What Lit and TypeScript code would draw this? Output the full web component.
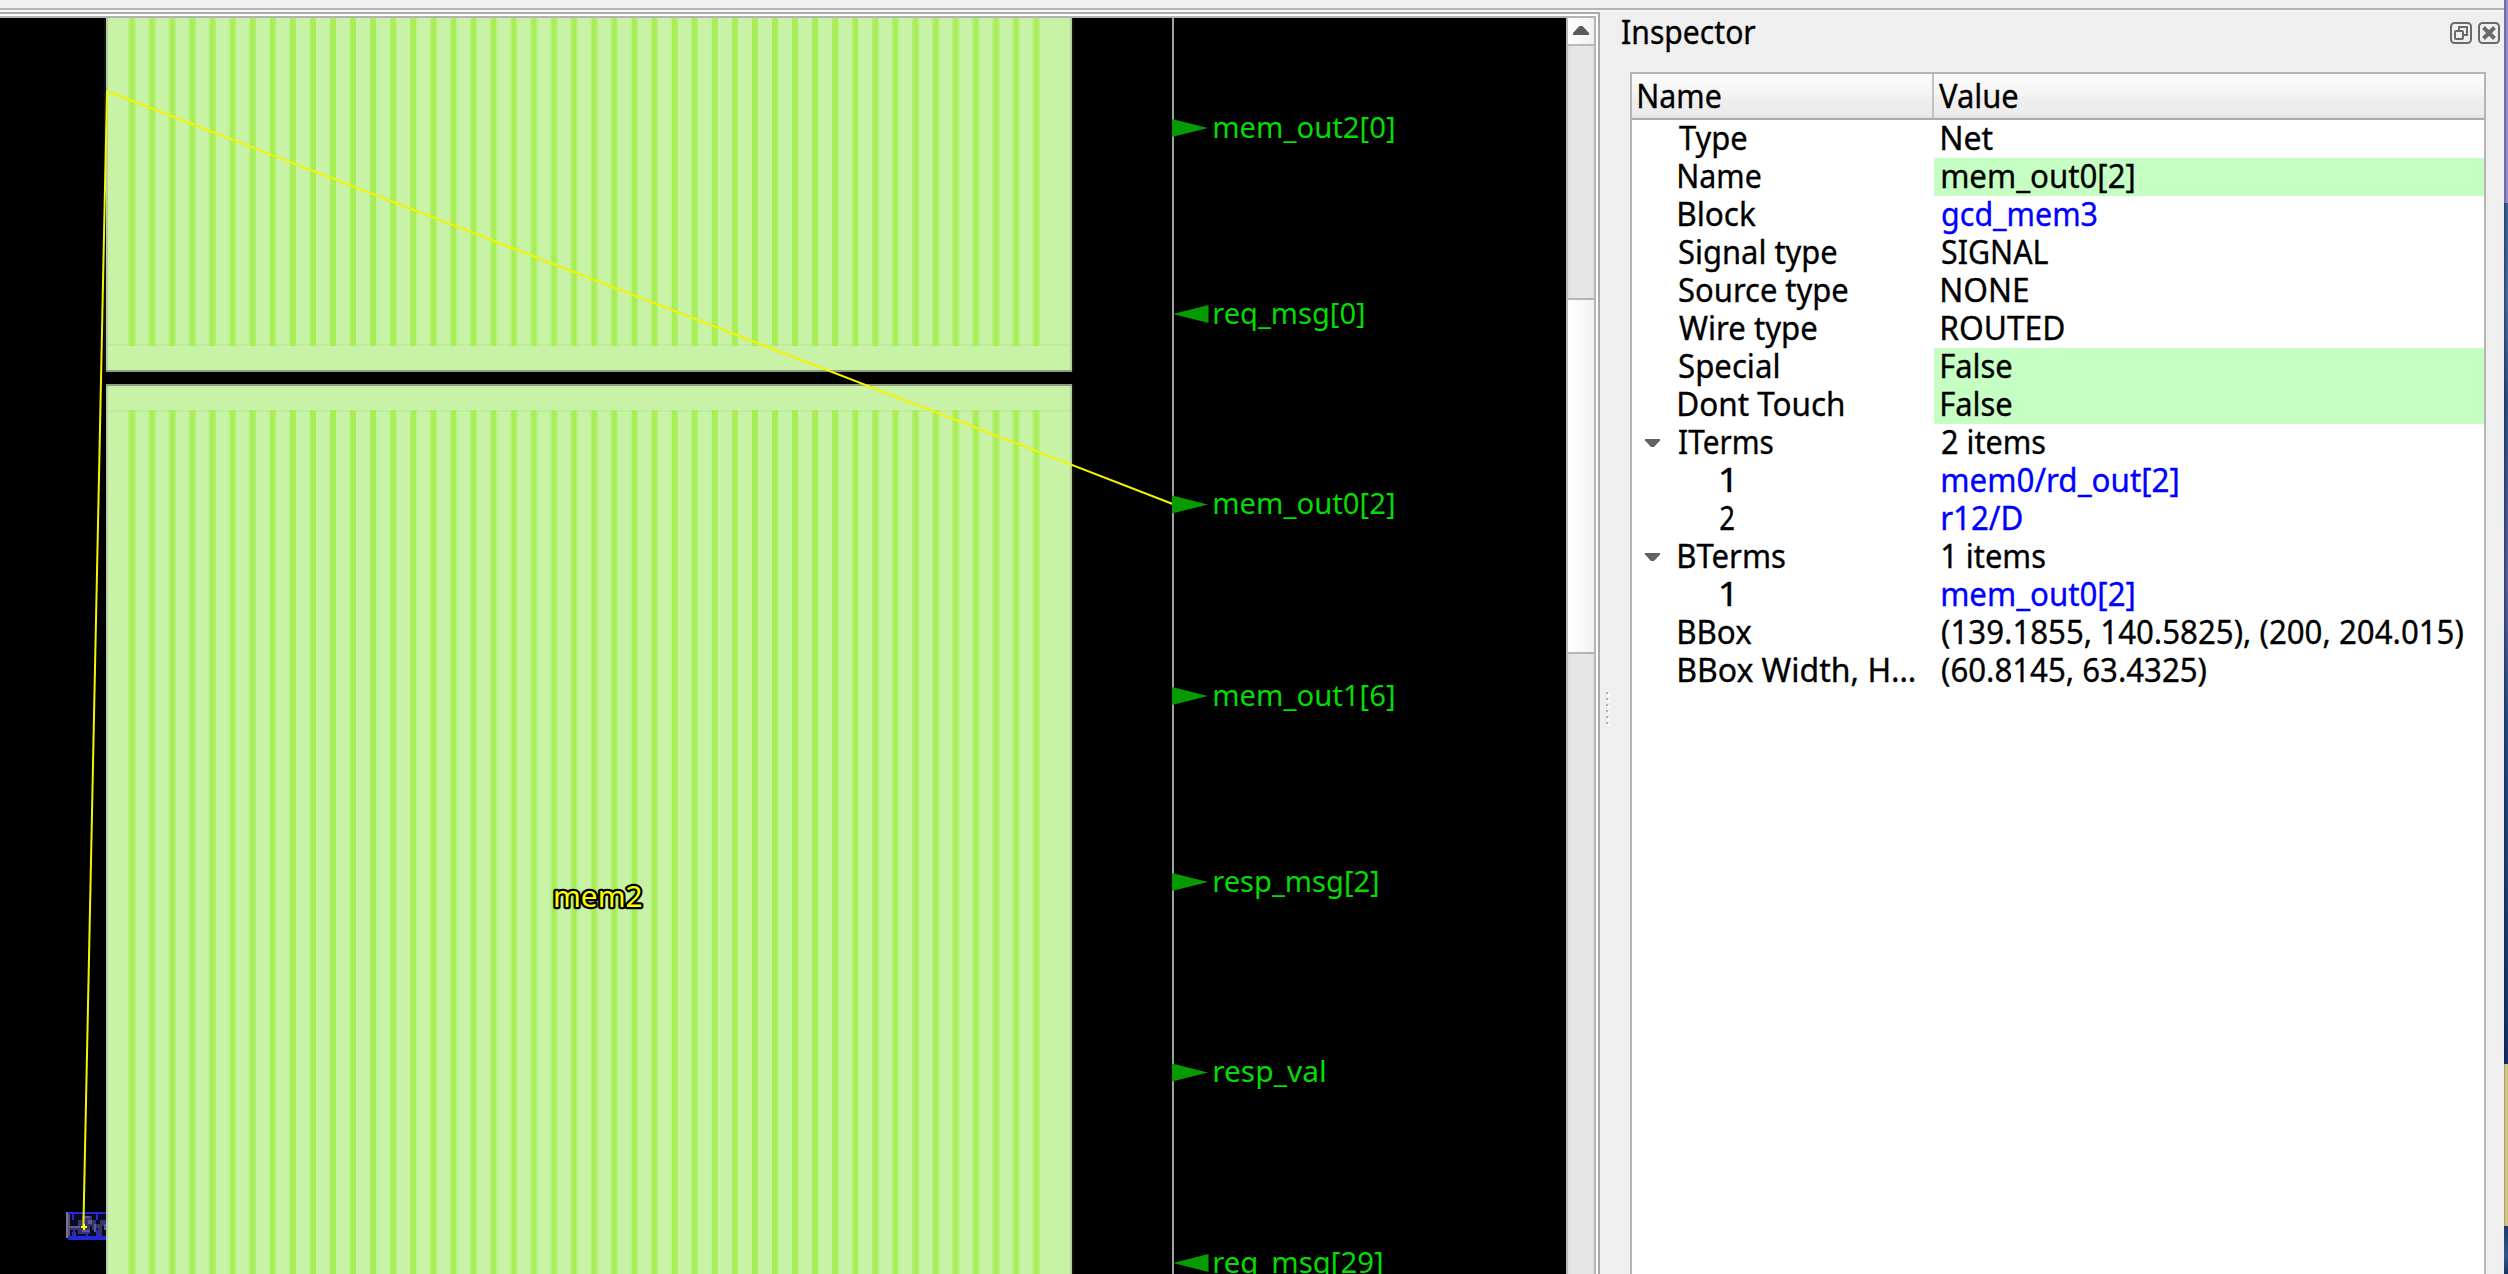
import { LitElement, html, svg, css, nothing } from "lit";
import { customElement, property } from "lit/decorators.js";

const FAMILY = '"Noto Sans", "Open Sans", sans-serif';
const pen = document.createElement("canvas").getContext("2d")!;

/** Horizontal placement that makes the ink of a string fill exactly `width` pixels. */
function fit(text: string, size: number, width: number) {
  pen.font = `${size}px ${FAMILY}`;
  const m = pen.measureText(text);
  const scale = width / (m.actualBoundingBoxLeft + m.actualBoundingBoxRight);
  return { scale, shift: m.actualBoundingBoxLeft * scale };
}

/** A single line of text condensed to a given ink width. */
@customElement("fit-label")
export class FitLabel extends LitElement {
  @property() text = "";
  @property({ type: Number }) ink = 100;
  @property({ type: Number }) size = 33.5;

  static styles = css`
    :host { display: block; height: 38px; }
    svg { display: block; overflow: visible; }
    text { font-family: "Noto Sans", "Open Sans", sans-serif; fill: currentColor; stroke: currentColor; stroke-width: 0.35px; }
  `;

  render() {
    const f = fit(this.text, this.size, this.ink);
    return html`<svg width=${this.ink} height="38">
      <text font-size=${this.size} transform="translate(${f.shift} 30.4) scale(${f.scale} 1)">${this.text}</text>
    </svg>`;
  }
}

interface Pin { y: number; name: string; ink: number; out: boolean; }

const PINS: Pin[] = [
  { y: 128, name: "mem_out2[0]", ink: 180, out: true },
  { y: 314, name: "req_msg[0]", ink: 150, out: false },
  { y: 504.5, name: "mem_out0[2]", ink: 180, out: true },
  { y: 696, name: "mem_out1[6]", ink: 180, out: true },
  { y: 882, name: "resp_msg[2]", ink: 164, out: true },
  { y: 1072.5, name: "resp_val", ink: 110, out: true },
  { y: 1263, name: "req_msg[29]", ink: 168, out: false },
];

/** The black layout canvas with macros, flight lines and pins. */
@customElement("layout-canvas")
export class LayoutCanvas extends LitElement {
  static styles = css`
    :host { display: block; width: 1566px; height: 1256px; background: #000; overflow: hidden; }
    svg { display: block; }
    .macro { fill: #c8f3a7; }
    .edge { fill: #8e9d83; }
    .side { fill: #b4cda3; }
    .seam { fill: #bfec9d; }
    .strap { fill: #a8ee57; }
    .die { fill: #a09ea4; }
    .pin { fill: #079b03; }
    .halo { fill: #121012; }
    text { font-family: "Noto Sans", "Open Sans", sans-serif; }
    .pin-name { fill: #04dc04; font-size: 28.5px; }
    .inst { fill: #ffff00; stroke: #000; stroke-width: 4.5px; paint-order: stroke; stroke-linejoin: round; font-size: 29px; }
    .net { stroke: #f4f400; stroke-width: 2px; fill: none; }
  `;

  /** Vertical straps, sampled on the two-pixel device grid. */
  private straps(top: number, bottom: number) {
    const out = [];
    for (let k = 0; k < 46; k++) {
      const a = 129.1 + k * 20.09;
      const b = a + 6;
      for (let x = Math.floor(a / 2) * 2; x < b; x += 2) {
        const cover = (Math.min(b, x + 2) - Math.max(a, x)) / 2;
        if (cover > 0.05) {
          out.push(svg`<rect class="strap" x=${x} y=${top} width="2" height=${bottom - top} opacity=${cover > 0.95 ? 1 : cover.toFixed(2)}/>`);
        }
      }
    }
    return out;
  }

  private pin(p: Pin) {
    const f = fit(p.name, 28.5, p.ink);
    const points = p.out
      ? `1172,${p.y - 9} 1172,${p.y + 9} 1208,${p.y}`
      : `1208.5,${p.y - 9} 1208.5,${p.y + 9} 1173,${p.y}`;
    return svg`
      <polygon class="pin" points=${points}/>
      <text class="pin-name" transform="translate(${1214.3 + f.shift} ${p.y + 9.5}) scale(${f.scale} 1)">${p.name}</text>`;
  }

  render() {
    const m = fit("mem2", 29, 87);
    return html`<svg width="1566" height="1256" viewBox="0 18 1566 1256">
      <g shape-rendering="crispEdges">
        <rect class="halo" x="104" y="18" width="970" height="354"/>
        <rect class="macro" x="106" y="18" width="966" height="354"/>
        <rect class="seam" x="106" y="344" width="966" height="2"/>
        ${this.straps(18, 346)}
        <rect class="side" x="106" y="18" width="2" height="354"/>
        <rect class="side" x="1070" y="18" width="2" height="354"/>
        <rect class="edge" x="106" y="370" width="966" height="2"/>

        <rect class="halo" x="1072" y="384" width="2" height="890"/>
        <rect class="macro" x="106" y="384" width="966" height="890"/>
        <rect class="seam" x="106" y="410" width="966" height="2"/>
        ${this.straps(410, 1274)}
        <rect class="side" x="106" y="384" width="2" height="890"/>
        <rect class="side" x="1070" y="384" width="2" height="890"/>
        <rect class="edge" x="106" y="384" width="966" height="2"/>
        <rect class="die" x="1172" y="18" width="2" height="1256"/>

        <rect x="68" y="1214" width="38" height="22" fill="#0b0b20"/>
        <path fill="#34346e" d="M68 1226h10v-6h4v-4h10v4h4v6h-6v8h-12v-4h-10zM92 1230v-6h8v-4h6v6h-4v10h-4v-8zM72 1232h4v4h-4z"/>
        <path fill="#5a5a94" d="M70 1226h10v2h-10zM84 1216h6v2h-6zM88 1220h4v4h-4zM94 1224h2v8h-2zM104 1224h2v6h-2zM82 1230h8v2h-8z"/>
        <path fill="#2626dc" d="M68 1212h38v2H68zM68 1236h38v4H68zM72 1214h2v6h-2zM96 1214h2v6h-2zM86 1232h2v4h-2zM96 1230h2v6h-2zM73 1230h2v6h-2z"/>
        <rect x="66" y="1212" width="2" height="26" fill="#77758e"/>
        <rect x="68" y="1214" width="2" height="22" fill="#55546a"/>
      </g>
      <path class="net" d="M107 91L83.4 1227"/>
      <path class="net" d="M107 91L1174 504.5"/>
      <path fill="#ffff00" d="M81 1226h2v-2h2v2h2v2h-2v2h-2v-2h-2z"/>
      ${PINS.map((p) => this.pin(p))}
      <text class="inst" transform="translate(${555 + m.shift} 906.5) scale(${m.scale} 1)">mem2</text>
    </svg>`;
  }
}

interface Row { name: string; nameInk: number; value: string; valueInk: number; kind?: "edit" | "link"; open?: boolean; child?: boolean; }

const ROWS: Row[] = [
  { name: "Type", nameInk: 68, value: "Net", valueInk: 51 },
  { name: "Name", nameInk: 82, value: "mem_out0[2]", valueInk: 192, kind: "edit" },
  { name: "Block", nameInk: 77, value: "gcd_mem3", valueInk: 155, kind: "link" },
  { name: "Signal type", nameInk: 158, value: "SIGNAL", valueInk: 106 },
  { name: "Source type", nameInk: 169, value: "NONE", valueInk: 86 },
  { name: "Wire type", nameInk: 138, value: "ROUTED", valueInk: 122 },
  { name: "Special", nameInk: 99, value: "False", valueInk: 70, kind: "edit" },
  { name: "Dont Touch", nameInk: 164, value: "False", valueInk: 70, kind: "edit" },
  { name: "ITerms", nameInk: 94, value: "2 items", valueInk: 103, open: true },
  { name: "1", nameInk: 11, value: "mem0/rd_out[2]", valueInk: 236, kind: "link", child: true },
  { name: "2", nameInk: 14, value: "r12/D", valueInk: 80, kind: "link", child: true },
  { name: "BTerms", nameInk: 106, value: "1 items", valueInk: 103, open: true },
  { name: "1", nameInk: 11, value: "mem_out0[2]", valueInk: 192, kind: "link", child: true },
  { name: "BBox", nameInk: 73, value: "(139.1855, 140.5825), (200, 204.015)", valueInk: 521 },
  { name: "BBox Width, H…", nameInk: 236, value: "(60.8145, 63.4325)", valueInk: 264 },
];

@customElement("inspector-dock")
export class InspectorDock extends LitElement {
  static styles = css`
    :host { display: flex; flex-direction: column; width: 904px; height: 1262px; box-sizing: border-box; color: #000; }
    .title { display: flex; height: 60px; box-sizing: border-box; padding: 2px 4px 0 22px; }
    .title fit-label { flex: 1; }
    .buttons { display: flex; gap: 6px; padding-top: 8px; }
    .body { display: flex; flex: 1; }
    .handle { width: 30px; box-sizing: border-box; padding: 620px 0 0 6px; }
    .handle svg { display: block; }
    .tree { display: flex; flex-direction: column; width: 852px; border: 2px solid #b5b5b5; border-bottom: 0; background: #fff; }
    .head { display: flex; height: 44px; border-bottom: 2px solid #aaa; background: linear-gradient(#fcfcfc 0, #f4f4f4 22px, #efefef 23px, #ececec 40px, #e2e2e2 44px); }
    .head fit-label { padding-top: 4px; }
    .head-name { width: 302px; box-sizing: border-box; padding-left: 6.5px; border-right: 2px solid #c3c3c3; }
    .head-value { padding-left: 4.5px; }
    .row { display: flex; height: 38px; }
    .name { width: 302px; box-sizing: border-box; display: flex; }
    .branch { width: 47px; flex: none; display: flex; align-items: center; padding-left: 13px; box-sizing: border-box; }
    .child .branch { width: 88px; }
    .value { flex: 1; padding-left: 7.5px; }
    .edit { background: #c5ffc3; }
    .link { color: #0000ff; }
  `;

  render() {
    return html`
      <div class="title">
        <fit-label text="Inspector" .ink=${134}></fit-label>
        <div class="buttons">
          <svg width="22" height="22" viewBox="0 0 22 22" fill="none" stroke="#6c6a66" stroke-width="2">
            <rect x="1" y="1" width="20" height="20" rx="3.5"/>
            <path d="M9 8V5h8v8h-3"/><rect x="5" y="9" width="8" height="8" rx="1"/>
          </svg>
          <svg width="22" height="22" viewBox="0 0 22 22" fill="none" stroke="#6c6a66" stroke-width="2">
            <rect x="1" y="1" width="20" height="20" rx="3.5"/>
            <path d="M5.5 5.5l11 11M16.5 5.5l-11 11" stroke-width="4"/>
          </svg>
        </div>
      </div>
      <div class="body">
        <div class="handle">
          <svg width="4" height="34">
            ${[0, 6, 12, 18, 24, 30].map((y) => svg`<rect x="2" y=${y + 2} width="2" height="2" fill="#fafafa"/><rect x="0" y=${y} width="2" height="2" fill="#b4b4b4"/>`)}
          </svg>
        </div>
        <div class="tree">
          <div class="head">
            <div class="head-name"><fit-label text="Name" .ink=${82}></fit-label></div>
            <div class="head-value"><fit-label text="Value" .ink=${79}></fit-label></div>
          </div>
          ${ROWS.map((r) => html`
            <div class="row ${r.child ? "child" : ""}">
              <div class="name">
                <div class="branch">
                  ${r.open ? html`<svg width="15" height="8" viewBox="0 0 15 8"><path d="M0 0h15v1.5L9 8H6L0 1.5z" fill="#626262"/></svg>` : nothing}
                </div>
                <fit-label .text=${r.name} .ink=${r.nameInk}></fit-label>
              </div>
              <div class="value ${r.kind ?? ""}"><fit-label .text=${r.value} .ink=${r.valueInk}></fit-label></div>
            </div>`)}
        </div>
      </div>`;
  }
}

@customElement("app-root")
export class AppRoot extends LitElement {
  static styles = css`
    :host { display: flex; width: 2508px; height: 1274px; overflow: hidden; background: #efefef; }
    .window { display: flex; flex-direction: column; width: 2504px; }
    .toolbar { height: 12px; box-sizing: border-box; padding-top: 8px; }
    .rule { height: 2px; background: #b4b4b4; border-bottom: 2px solid #f7f7f7; }
    .main { display: flex; height: 1262px; }
    .frame { display: flex; width: 1600px; height: 1262px; box-sizing: border-box; border-top: 2px solid #aaa; border-right: 2px solid #a9a9a9; padding: 2px 2px 0 0; background: #fff; }
    .view { display: flex; width: 1596px; box-sizing: border-box; border-top: 2px solid #b4b4b4; border-right: 2px solid #b4b4b4; }
    .bar { display: flex; flex-direction: column; width: 28px; box-sizing: border-box; border-left: 2px solid #bababa; background: linear-gradient(90deg, #dcdcdc 0, #e6e6e6 3px, #e6e6e6 23px, #dfdfdf 26px); }
    .up { height: 28px; box-sizing: border-box; display: flex; justify-content: center; padding-top: 8px; border-bottom: 2px solid #bababa; background: linear-gradient(90deg, #fff, #f0f0f0); }
    .page { height: 252px; box-sizing: border-box; }
    .thumb { height: 356px; box-sizing: border-box; border: solid #b4b4b4; border-width: 2px 0; background: linear-gradient(90deg, #fff, #fafafa 12px, #f1f1f1); }
    .desktop { display: flex; flex-direction: column; width: 4px; }
    .sky { height: 203px; background: linear-gradient(90deg, #6f6aa8 50%, #9190cc 50%); }
    .hills { height: 861px; background: linear-gradient(90deg, rgba(10, 20, 70, 0.35) 50%, transparent 50%), linear-gradient(#3a6094 0, #4b6a9c 100px, #2d4d82 200px, #56639a 380px, #274a80 520px, #163066 861px); }
    .note { height: 162px; background: linear-gradient(90deg, #a99f68 25%, #cfc383 25%); }
    .lake { flex: 1; background: linear-gradient(#1c3a68, #30588c 60%, #173468); }
  `;

  render() {
    return html`
      <div class="window">
        <div class="toolbar"><div class="rule"></div></div>
        <div class="main">
          <div class="frame">
            <div class="view">
              <layout-canvas></layout-canvas>
              <div class="bar">
                <div class="up"><svg width="16" height="9" viewBox="0 0 16 9"><path d="M6.5 0h3L16 7v2H0V7z" fill="#5a5a5a"/></svg></div>
                <div class="page"></div>
                <div class="thumb"></div>
              </div>
            </div>
          </div>
          <inspector-dock></inspector-dock>
        </div>
      </div>
      <div class="desktop">
        <div class="sky"></div>
        <div class="hills"></div>
        <div class="note"></div>
        <div class="lake"></div>
      </div>`;
  }
}
